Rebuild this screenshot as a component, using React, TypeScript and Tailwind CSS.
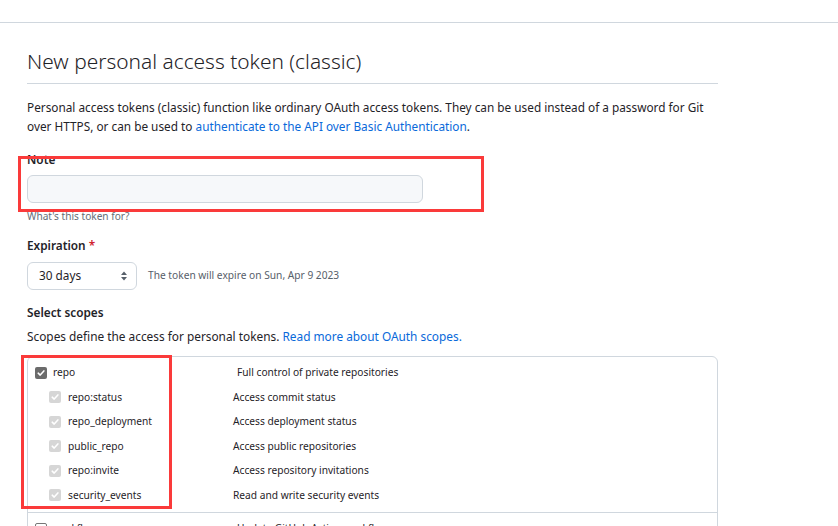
import React from 'react';

const font = { fontFamily: '"Segoe UI", "Noto Sans", sans-serif' };

const Check = ({ kind }: { kind: 'dark' | 'light' | 'empty' }) => {
    if (kind === 'empty') {
        return <span className="block w-[12px] h-[12px] rounded-[2px] border border-[#767676] bg-white shrink-0" />;
    }
    return (
        <span
            className={
                kind === 'dark'
                    ? 'flex items-center justify-center w-[12px] h-[12px] rounded-[2px] bg-[#6b6b6b] shrink-0'
                    : 'flex items-center justify-center w-[12px] h-[12px] rounded-[2px] bg-[#d6d6d6] shrink-0'
            }
        >
            <svg width="8" height="8" viewBox="0 0 10 10" fill="none">
                <path d="M1.5 5.2 L4 7.6 L8.6 2.4" stroke="white" strokeWidth="1.9" strokeLinecap="round" strokeLinejoin="round" />
            </svg>
        </span>
    );
};

const subScopes = [
    ['repo:status', 'Access commit status'],
    ['repo_deployment', 'Access deployment status'],
    ['public_repo', 'Access public repositories'],
    ['repo:invite', 'Access repository invitations'],
    ['security_events', 'Read and write security events'],
];

export default function App() {
    return (
        <div className="relative w-[838px] h-[526px] overflow-hidden bg-white text-[#1f2328]" style={font}>
            {/* top nav border */}
            <div className="h-[23px] border-b border-[#d0d7de]" />

            <div className="pl-[27px] w-[718px]">
                {/* Subhead */}
                <div className="mt-[20px] pb-[4px] border-b border-[#d0d7de]">
                    <h2 className="text-[20.9px] leading-[36px] font-light">New personal access token (classic)</h2>
                </div>

                <p className="mt-[14px] text-[11.8px] leading-[19px]">
                    Personal access tokens (classic) function like ordinary OAuth access tokens. They can be used instead of a password for Git
                    <br />
                    over HTTPS, or can be used to{' '}
                    <span className="text-[#0969da]">authenticate to the API over Basic Authentication</span>.
                </p>

                {/* Note */}
                <div className="mt-[14px] text-[11.8px] leading-[19px] font-semibold">Note</div>
                <div className="mt-[6px] w-[396px] h-[28px] rounded-[6px] border border-[#d0d7de] bg-[#f6f8fa]" />
                <div className="mt-[5px] text-[10.1px] leading-[16px] text-[#656d76]">What's this token for?</div>

                {/* Expiration */}
                <div className="mt-[12px] text-[11.8px] leading-[19px] font-semibold">
                    Expiration <span className="text-[#cf222e]">*</span>
                </div>
                <div className="mt-[7px] flex items-center gap-[11px]">
                    <div className="w-[110px] h-[28px] rounded-[6px] border border-[#d0d7de] bg-white flex items-center justify-between pl-[11px] pr-[8px] text-[11.8px]">
                        <span>30 days</span>
                        <svg width="8" height="12" viewBox="0 0 8 12">
                            <path d="M4 1.5 L7 5 H1 Z" fill="#57606a" />
                            <path d="M4 10.5 L7 7 H1 Z" fill="#57606a" />
                        </svg>
                    </div>
                    <span className="text-[10.2px] text-[#57606a]">The token will expire on Sun, Apr 9 2023</span>
                </div>

                {/* Scopes */}
                <div className="mt-[13px] text-[11.8px] leading-[19px] font-semibold">Select scopes</div>
                <div className="mt-[5px] text-[11.85px] leading-[19px]">
                    Scopes define the access for personal tokens.{' '}
                    <span className="text-[#0969da]">Read more about OAuth scopes.</span>
                </div>

                <div className="mt-[10px] border border-[#d0d7de] rounded-t-[6px] h-[300px]">
                    <div className="pt-[3px] pb-[4px] border-b border-[#d0d7de]">
                        <div className="flex items-center h-[25px] pl-[7px] text-[10.2px]">
                            <Check kind="dark" />
                            <span className="ml-[6px] w-[184px]">repo</span>
                            <span>Full control of private repositories</span>
                        </div>
                        {subScopes.map(([name, desc]) => (
                            <div key={name} className="flex items-center h-[24.5px] pl-[21px] text-[10.2px]">
                                <Check kind="light" />
                                <span className="ml-[7px] w-[165px]">{name}</span>
                                <span>{desc}</span>
                            </div>
                        ))}
                    </div>
                    <div className="pt-[4px]">
                        <div className="flex items-center h-[25px] pl-[7px] text-[10.2px]">
                            <Check kind="empty" />
                            <span className="ml-[6px] w-[184px]">workflow</span>
                            <span>Update GitHub Action workflows</span>
                        </div>
                    </div>
                </div>
            </div>

            {/* annotation boxes */}
            <div className="absolute left-[18px] top-[156px] w-[466px] h-[56px] border-[3px] border-[#fa3a3a]" />
            <div className="absolute left-[21px] top-[355px] w-[151px] h-[154px] border-[3px] border-[#fa3a3a]" />
        </div>
    );
}
